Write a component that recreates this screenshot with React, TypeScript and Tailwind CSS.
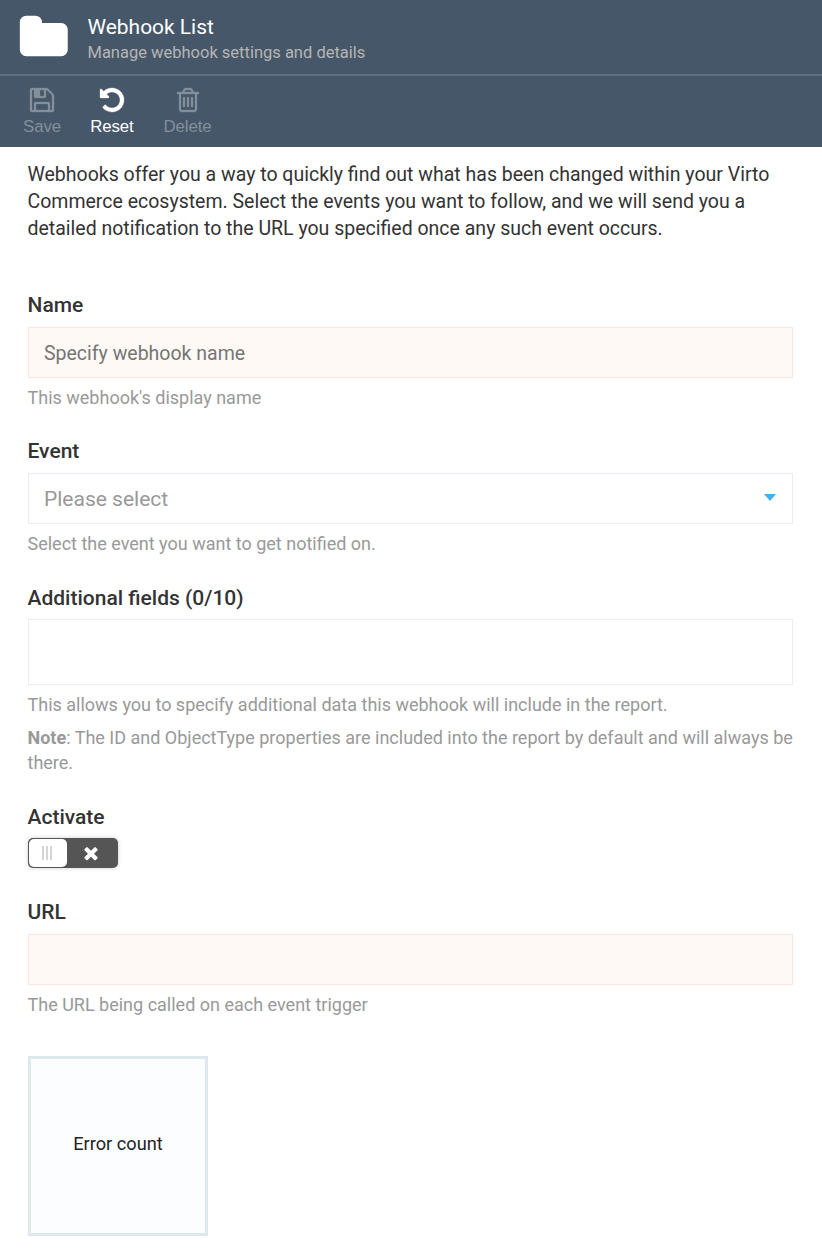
import React from 'react';

type IconProps = { d: string; className: string };

const Icon = ({ d, className }: IconProps) => (
  <svg viewBox="0 0 1792 1792" fill="currentColor" className={className} aria-hidden="true">
    <path d={d} />
  </svg>
);

const FOLDER =
  'M1728 608v704q0 92-66 158t-158 66h-1216q-92 0-158-66t-66-158v-960q0-92 66-158t158-66h320q92 0 158 66t66 158v32h672q92 0 158 66t66 158z';
const SAVE =
  'M512 1536h768v-384h-768v384zm896 0h128v-896q0-14-10-38.5t-20-34.5l-281-281q-10-10-34-20t-39-10v416q0 40-28 68t-68 28h-576q-40 0-68-28t-28-68v-416h-128v1280h128v-416q0-40 28-68t68-28h832q40 0 68 28t28 68v416zm-384-928v-320q0-13-9.5-22.5t-22.5-9.5h-192q-13 0-22.5 9.5t-9.5 22.5v320q0 13 9.5 22.5t22.5 9.5h192q13 0 22.5-9.5t9.5-22.5zm640 32v928q0 40-28 68t-68 28h-1344q-40 0-68-28t-28-68v-1344q0-40 28-68t68-28h928q40 0 88 20t76 48l280 280q28 28 48 76t20 88z';
const UNDO =
  'M1664 896q0 156-61 298t-164 245-245 164-298 61q-172 0-327-72.5t-264-204.5q-7-10-6.5-22.5t8.5-20.5l137-138q10-9 25-9 16 2 23 12 73 95 179 147t225 52q104 0 198.5-40.5t163.5-109.5 109.5-163.5 40.5-198.5-40.5-198.5-109.5-163.5-163.5-109.5-198.5-40.5q-98 0-188 35.5t-160 101.5l137 138q31 30 14 69-17 40-59 40h-448q-26 0-45-19t-19-45v-448q0-42 40-59 39-17 69 14l130 129q107-101 244.5-156.5t284.5-55.5q156 0 298 61t245 164 164 245 61 298z';
const TRASH =
  'M704 736v576q0 14-9 23t-23 9h-64q-14 0-23-9t-9-23v-576q0-14 9-23t23-9h64q14 0 23 9t9 23zm256 0v576q0 14-9 23t-23 9h-64q-14 0-23-9t-9-23v-576q0-14 9-23t23-9h64q14 0 23 9t9 23zm256 0v576q0 14-9 23t-23 9h-64q-14 0-23-9t-9-23v-576q0-14 9-23t23-9h64q14 0 23 9t9 23zm128 724v-948h-896v948q0 22 7 40.5t14.5 27 10.5 8.5h832q3 0 10.5-8.5t14.5-27 7-40.5zm-672-1076h448l-48-117q-7-9-17-11h-317q-10 2-17 11zm928 32v64q0 14-9 23t-23 9h-96v948q0 83-47 143.5t-113 60.5h-832q-66 0-113-58.5t-47-141.5v-952h-96q-14 0-23-9t-9-23v-64q0-14 9-23t23-9h309l70-167q15-37 54-63t79-26h320q40 0 79 26t54 63l70 167h309q14 0 23 9t9 23z';
const CLOSE =
  'M1490 1322q0 40-28 68l-136 136q-28 28-68 28t-68-28l-294-294-294 294q-28 28-68 28t-68-28l-136-136q-28-28-28-68t28-68l294-294-294-294q-28-28-28-68t28-68l136-136q28-28 68-28t68 28l294 294 294-294q28-28 68-28t68 28l136 136q28 28 28 68t-28 68l-294 294 294 294q28 28 28 68z';

const ToolButton = ({ icon, label, className }: { icon: string; label: string; className: string }) => (
  <button className={`flex flex-col items-center ${className}`}>
    <Icon d={icon} className="h-7 w-7 stroke-current stroke-[20]" />
    <span className="mt-[3.5px] font-['Liberation_Sans',sans-serif] text-[16.8px] leading-5 tracking-[-0.1px]">{label}</span>
  </button>
);

const Label = ({ children }: { children: React.ReactNode }) => (
  <div className="-ml-[0.5px] h-6 text-[21px] leading-6 font-medium text-[#333]">{children}</div>
);

const Hint = ({ children }: { children: React.ReactNode }) => (
  <p className="-ml-[0.5px] text-[18px] leading-[25px] whitespace-nowrap text-[#999]">{children}</p>
);

export default function App() {
  return (
    <div className="flex h-[1250px] w-[822px] flex-col bg-white font-[Roboto,sans-serif]">
      <header className="h-[147px] bg-[#465769]">
        <div className="flex h-[74px] pt-3 pl-[18px]">
          <Icon d={FOLDER} className="mt-[0.4px] h-[51.6px] w-[51.6px] text-white" />
          <div className="ml-[17.9px]">
            <h1 className="text-[20.95px] leading-[30px] text-white">Webhook List</h1>
            <p className="mt-px text-[16.5px] leading-5 text-[#b5b5b5]">Manage webhook settings and details</p>
          </div>
        </div>
        <div className="h-[2px] bg-[#5e7282]" />
        <div className="flex pt-[9.5px] pl-1">
          <ToolButton icon={SAVE} label="Save" className="w-[76px] text-[#83909c]" />
          <ToolButton icon={UNDO} label="Reset" className="w-16 text-white" />
          <ToolButton icon={TRASH} label="Delete" className="w-[87px] text-[#83909c]" />
        </div>
      </header>

      <main className="flex flex-col px-7 pt-[14px]">
        <p className="-ml-[0.5px] text-[19.5px] leading-[27px] text-[#333]">
          Webhooks offer you a way to quickly find out what has been changed within your Virto
          <br />
          Commerce ecosystem. Select the events you want to follow, and we will send you a
          <br />
          detailed notification to the URL you specified once any such event occurs.
        </p>

        <section className="mt-[51px]">
          <Label>Name</Label>
          <input
            placeholder="Specify webhook name"
            className="mt-[10px] mb-[7px] block h-[51px] w-[765px] border border-[#fce4e4] bg-[#fff9f6] px-[15px] pt-[2px] text-[19.5px] text-[#333] placeholder:text-[#757575]"
          />
          <Hint>This webhook's display name</Hint>
        </section>

        <section className="mt-[29px]">
          <Label>Event</Label>
          <div className="mt-[10px] mb-[7px] flex h-[51px] w-[765px] items-center justify-between border border-[#eaecf5] pr-4 pl-[15px] text-[21px] text-[#999]">
            <span className="pt-[2px]">Please select</span>
            <svg viewBox="0 0 12 7" className="mb-[3px] h-[7px] w-3" fill="#43b0e6">
              <path d="M0 0h12L6 7z" />
            </svg>
          </div>
          <Hint>Select the event you want to get notified on.</Hint>
        </section>

        <section className="mt-[30px]">
          <Label>Additional fields (0/10)</Label>
          <div className="mt-[9px] mb-[7px] h-[66px] w-[765px] border border-[#eaecf5]" />
          <Hint>This allows you to specify additional data this webhook will include in the report.</Hint>
          <div className="mt-2">
            <Hint>
              <b>Note</b>: The ID and ObjectType properties are included into the report by default and will always be
              <br />
              there.
            </Hint>
          </div>
        </section>

        <section className="mt-[30px]">
          <Label>Activate</Label>
          <div className="mt-[9px] flex h-[30px] w-[90px] rounded-[5px] bg-[#555] p-px shadow-[0_0_4px_rgba(0,0,0,0.2)]">
            <div className="flex w-[38px] items-center justify-center gap-[2px] rounded-[5px] bg-white pr-[2px]">
              <i className="h-[14px] w-[2px] bg-[#d5d5d5]" />
              <i className="h-[14px] w-[2px] bg-[#d5d5d5]" />
              <i className="h-[14px] w-[2px] bg-[#d5d5d5]" />
            </div>
            <div className="flex w-12 items-center justify-center text-white">
              <Icon d={CLOSE} className="h-5 w-5" />
            </div>
          </div>
        </section>

        <section className="mt-8">
          <Label>URL</Label>
          <input className="mt-[10px] mb-[7px] block h-[51px] w-[765px] border border-[#fce4e4] bg-[#fff9f6] px-[15px] text-[19.5px]" />
          <Hint>The URL being called on each event trigger</Hint>
        </section>

        <div className="mt-[39px] flex h-[180px] w-[180px] items-center justify-center border-[3px] border-[#dee9ef] bg-[#fcfdff] pb-[5px] text-[18.2px] text-[#222]">
          Error count
        </div>
      </main>
    </div>
  );
}
